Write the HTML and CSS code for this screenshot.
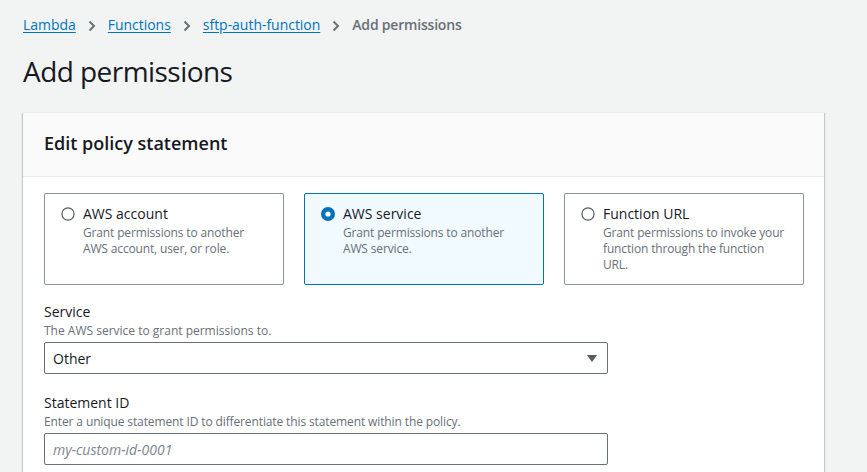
FILE: index.html
```html
<!DOCTYPE html>
<html lang="en">
<head>
<meta charset="utf-8">
<title>Add permissions</title>
<link rel="stylesheet" href="styles.css">
</head>
<body>
<main class="page">
  <nav class="crumbs">
    <a href="#" class="crumb-link">Lambda</a>
    <svg class="chev" width="8" height="12" viewBox="0 0 8 12"><path d="M1.5 1.5 L6 6 L1.5 10.5" fill="none" stroke="#687078" stroke-width="2"/></svg>
    <a href="#" class="crumb-link">Functions</a>
    <svg class="chev" width="8" height="12" viewBox="0 0 8 12"><path d="M1.5 1.5 L6 6 L1.5 10.5" fill="none" stroke="#687078" stroke-width="2"/></svg>
    <a href="#" class="crumb-link">sftp-auth-function</a>
    <svg class="chev" width="8" height="12" viewBox="0 0 8 12"><path d="M1.5 1.5 L6 6 L1.5 10.5" fill="none" stroke="#687078" stroke-width="2"/></svg>
    <span class="crumb-current">Add permissions</span>
  </nav>

  <h1 class="page-title">Add permissions</h1>

  <section class="card">
    <header class="card-header">
      <h2 class="card-title">Edit policy statement</h2>
    </header>
    <div class="card-body">
      <div class="tiles">
        <label class="tile">
          <svg class="radio" width="14" height="14" viewBox="0 0 14 14"><circle cx="7" cy="7" r="6.1" fill="#fff" stroke="#545b64" stroke-width="1.2"/></svg>
          <span class="tile-text">
            <span class="tile-label">AWS account</span>
            <span class="tile-desc">Grant permissions to another AWS account, user, or role.</span>
          </span>
        </label>
        <label class="tile tile-selected">
          <svg class="radio" width="14" height="14" viewBox="0 0 14 14"><circle cx="7" cy="7" r="7" fill="#0073bb"/><circle cx="7" cy="7" r="2.6" fill="#fff"/></svg>
          <span class="tile-text">
            <span class="tile-label">AWS service</span>
            <span class="tile-desc">Grant permissions to another AWS service.</span>
          </span>
        </label>
        <label class="tile">
          <svg class="radio" width="14" height="14" viewBox="0 0 14 14"><circle cx="7" cy="7" r="6.1" fill="#fff" stroke="#545b64" stroke-width="1.2"/></svg>
          <span class="tile-text">
            <span class="tile-label">Function URL</span>
            <span class="tile-desc">Grant permissions to invoke your function through the function URL.</span>
          </span>
        </label>
      </div>

      <div class="field">
        <div class="field-label">Service</div>
        <div class="field-desc">The AWS service to grant permissions to.</div>
        <div class="select">
          <span class="select-value">Other</span>
          <svg class="caret" width="10" height="7" viewBox="0 0 10 7"><path d="M0 0 H10 L5 7 Z" fill="#545b64"/></svg>
        </div>
      </div>

      <div class="field">
        <div class="field-label">Statement ID</div>
        <div class="field-desc field-desc-narrow">Enter a unique statement ID to differentiate this statement within the policy.</div>
        <div class="input">
          <span class="placeholder">my-custom-id-0001</span>
        </div>
      </div>
    </div>
  </section>
</main>
</body>
</html>
```

FILE: styles.css
```css
html, body {
  margin: 0;
  padding: 0;
}

body {
  background: #f2f3f3;
  font-family: "Open Sans", "Noto Sans", Arial, sans-serif;
  color: #16191f;
  height: 472px;
  overflow: hidden;
}

.page {
  padding: 15px 43px 0 23px;
}

.crumbs {
  display: flex;
  align-items: center;
  height: 20px;
  font-size: 14px;
  line-height: 20px;
  letter-spacing: -0.03px;
}

.crumb-link {
  color: #0073bb;
  text-decoration: underline;
  text-underline-offset: 2px;
}

.chev {
  margin: 1px 12px 0 12px;
}

.crumb-current {
  color: #687078;
  font-weight: 600;
  letter-spacing: -0.2px;
}

.page-title {
  margin: 18px 0 23px 0;
  font-size: 28px;
  line-height: 36px;
  font-weight: 400;
  letter-spacing: -0.55px;
  color: #16191f;
}

.card {
  background: #fff;
  border-top: 1px solid #eaeded;
  box-shadow: 0 1px 1px 0 rgba(0, 28, 36, 0.3), 1px 1px 1px 0 rgba(0, 28, 36, 0.15), -1px 1px 1px 0 rgba(0, 28, 36, 0.15);
}

.card-header {
  background: #fafafa;
  padding: 19px 20px 22px 21px;
  border-bottom: 1px solid #eaeded;
}

.card-title {
  margin: 0;
  font-size: 18px;
  line-height: 22px;
  font-weight: 600;
}

.card-body {
  padding: 16px 20px 20px 21px;
}

.tiles {
  display: grid;
  grid-template-columns: repeat(3, 1fr);
  gap: 20px;
}

.tile {
  display: flex;
  align-items: flex-start;
  gap: 8px;
  border: 1px solid #879596;
  border-radius: 2px;
  padding: 10px 16px 11px 16px;
}

.tile-selected {
  border-color: #0073bb;
  background: #f1faff;
}

.radio {
  flex: none;
  margin-top: 3px;
}

.tile-text {
  display: flex;
  flex-direction: column;
}

.tile-label {
  font-size: 14px;
  line-height: 20px;
  color: #16191f;
}

.tile-desc {
  margin-top: 1px;
  font-size: 12px;
  line-height: 16px;
  color: #687078;
  letter-spacing: -0.15px;
}

.field {
  margin-top: 17px;
}

.field + .field {
  margin-top: 19px;
}

.field-label {
  font-size: 14px;
  line-height: 20px;
  color: #16191f;
}

.field-desc {
  margin: 1px 0 3px 0;
  font-size: 12px;
  line-height: 16px;
  color: #687078;
}

.field-desc-narrow {
  letter-spacing: -0.12px;
}

.select,
.input {
  box-sizing: border-box;
  width: 564px;
  height: 32px;
  border: 1px solid #687078;
  border-radius: 2px;
  background: #fff;
  display: flex;
  align-items: center;
  justify-content: space-between;
  padding: 0 10px 0 8px;
  font-size: 14px;
}

.select-value {
  color: #16191f;
}

.caret {
  margin-top: 1px;
}

.placeholder {
  color: #7d8590;
  font-style: italic;
}
```
